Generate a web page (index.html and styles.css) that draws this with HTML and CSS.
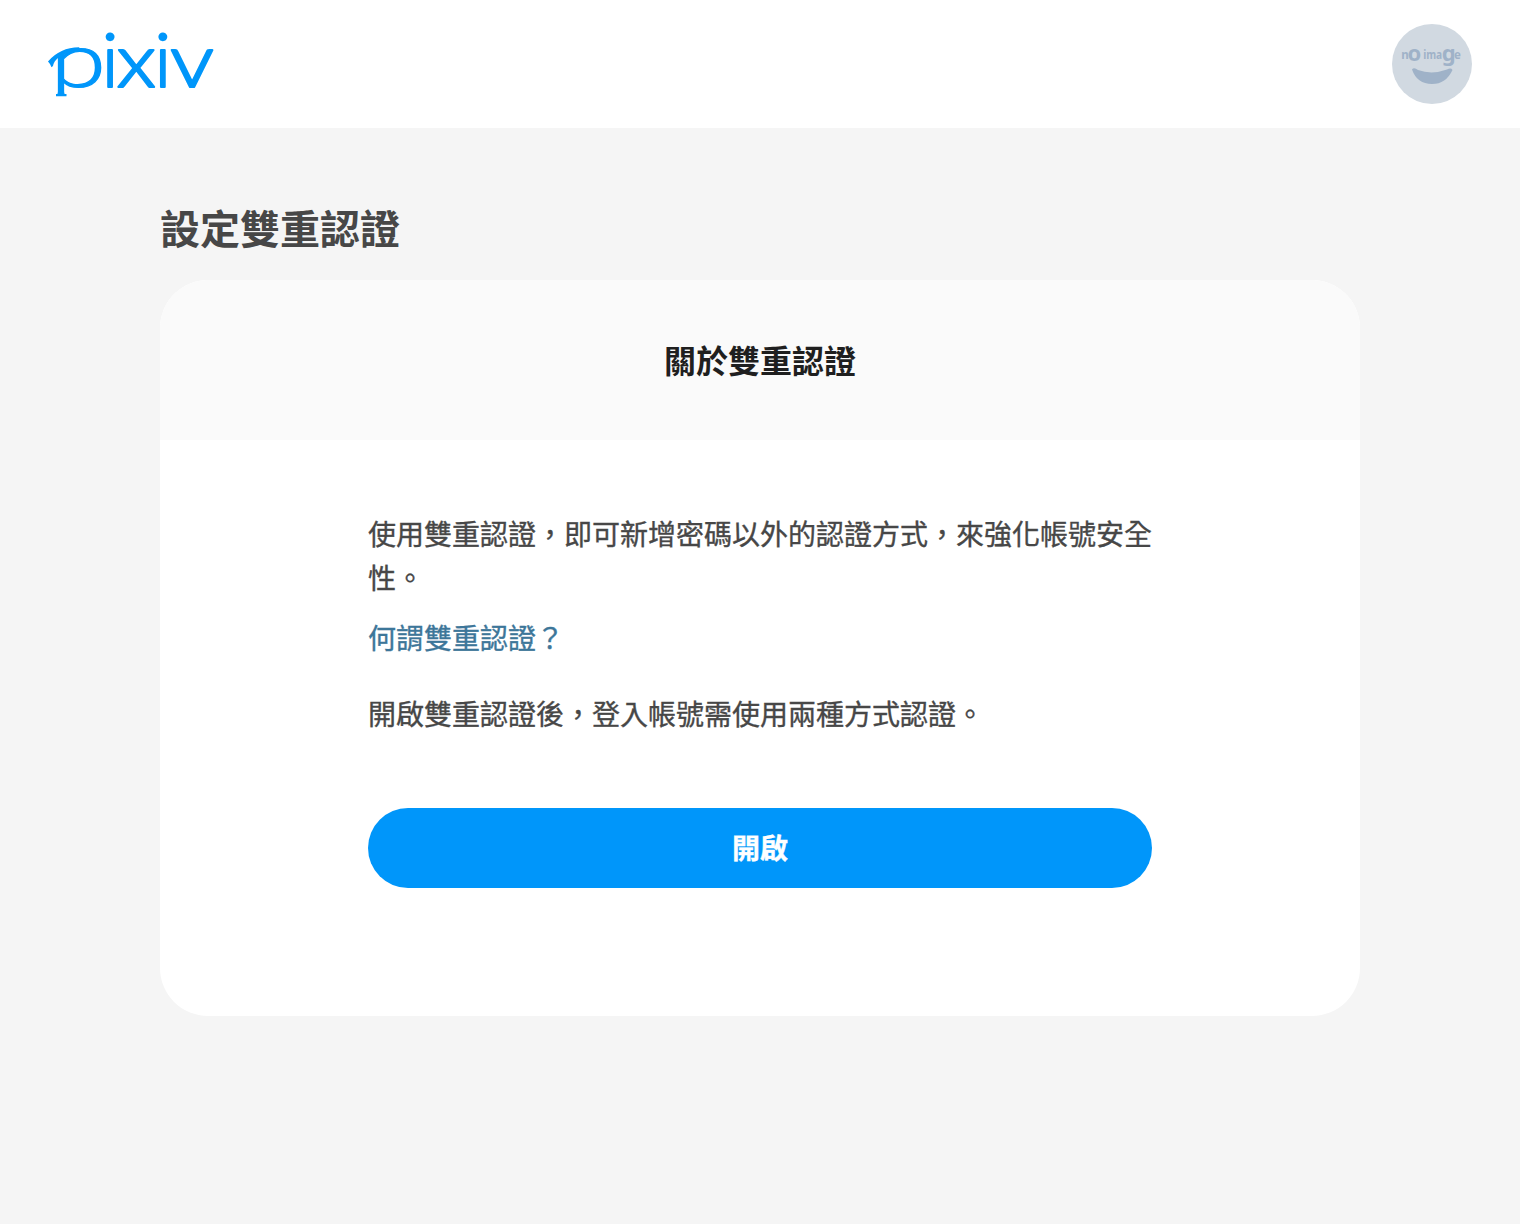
FILE: index.html
```
<!DOCTYPE html>
<html lang="zh-TW">
<head>
    <meta charset="UTF-8">
    <meta name="viewport" content="width=device-width, initial-scale=1.0">
    <title>設定雙重認證 - pixiv</title>
    <link rel="stylesheet" href="styles.css">
</head>
<body>
    <header class="header">
        <a class="logo" href="#">
            <svg width="166" height="66" viewBox="48 31 166 66" role="img" aria-label="pixiv">
                <clipPath id="stemClip"><path d="M57.5 56L64 51L70 48L76 45H110V95H57.5Z"/></clipPath>
                <g clip-path="url(#stemClip)">
                    <text class="logo-p" transform="translate(50.2 87) scale(1.31 1)">p</text>
                </g>
                <path d="M48 61.5Q60 47.5 79 47.3L81 50Q69 50.5 64 55L58 58Q54 61 53 66L51.5 67.3Q50.5 64 48 61.5Z"/>
                <path d="M58 92H64L64.5 94H66.5V96.2H56V94H57.5Z"/>
                <text class="logo-rest" x="101.7" y="87">i</text>
                <text class="logo-rest" transform="translate(116.7 87) scale(1.11 1)">x</text>
                <text class="logo-rest" x="154.5" y="87">i</text>
                <text class="logo-rest" transform="translate(170.3 87) scale(1.16 1)">v</text>
            </svg>
        </a>
        <svg class="avatar" width="80" height="80" viewBox="0 0 80 80">
            <circle cx="40" cy="40" r="40" fill="#d1d9e1"/>
            <g class="avatar-text">
                <text x="9.3" y="34.8">n</text>
                <text class="big" x="15.6" y="37">o</text>
                <text x="31.2" y="34.8" textLength="19" lengthAdjust="spacingAndGlyphs">ima</text>
                <text class="big" x="49.7" y="36.5">g</text>
                <text x="62" y="34.8">e</text>
            </g>
            <path d="M20 45.5Q22 43 26 46Q40 51 55 45.5Q59 43.5 60.5 46Q54 60 40 60Q25 60 20 45.5Z" fill="#9fb2c8"/>
        </svg>
    </header>

    <main class="container">
        <h1>設定雙重認證</h1>
        <section class="card">
            <h2 class="card-title">關於雙重認證</h2>
            <div class="card-body">
                <p>使用雙重認證，即可新增密碼以外的認證方式，來強化帳號安全性。</p>
                <a class="help-link" href="#">何謂雙重認證？</a>
                <p>開啟雙重認證後，登入帳號需使用兩種方式認證。</p>
                <button class="enable-button">開啟</button>
            </div>
        </section>
    </main>
</body>
</html>
```
FILE: styles.css
```
* {
    box-sizing: border-box;
}
body {
    margin: 0;
    min-height: 100vh;
    background-color: #f5f5f5;
    color: #474747;
    font-family: "Noto Sans CJK TC", sans-serif;
}
.header {
    display: flex;
    justify-content: space-between;
    align-items: center;
    height: 128px;
    padding: 0 48px;
    background-color: #fff;
}
.logo svg {
    display: block;
    fill: #0096fa;
    overflow: visible;
}
.logo-p {
    font-family: Lato, sans-serif;
    font-size: 77px;
    font-weight: 300;
    stroke: #0096fa;
    stroke-width: 1.2px;
}
.logo-rest {
    font-family: Lato, sans-serif;
    font-size: 75px;
    font-weight: 300;
    stroke: #0096fa;
    stroke-width: 2.2px;
    stroke-linejoin: round;
}
.avatar-text {
    fill: #9fb2c8;
    font-family: "Noto Sans", sans-serif;
    font-size: 11.5px;
    font-weight: 700;
}
.avatar-text .big {
    font-size: 22px;
}
.container {
    width: 1200px;
    margin: 0 auto;
    padding-top: 71px;
}
h1 {
    margin: 0 0 25px;
    font-size: 40px;
    line-height: 56px;
    font-weight: 700;
}
.card {
    border-radius: 48px;
    background-color: #fff;
    overflow: hidden;
}
.card-title {
    height: 160px;
    margin: 0;
    background-color: #fafafa;
    color: #1f1f1f;
    font-size: 32px;
    line-height: 158px;
    font-weight: 700;
    text-align: center;
}
.card-body {
    padding: 71px 208px 128px;
    font-size: 28px;
    line-height: 44px;
    -webkit-text-stroke: 0.35px;
}
.card-body p {
    margin: 0;
}
.help-link {
    display: block;
    margin: 16px 0 32px;
    color: #3d7699;
    text-decoration: none;
}
.enable-button {
    display: block;
    width: 100%;
    height: 80px;
    margin-top: 73px;
    padding: 0 0 3px;
    border: 0;
    border-radius: 40px;
    background-color: #0096fa;
    color: #fff;
    font-family: inherit;
    font-size: 28px;
    font-weight: 700;
    cursor: pointer;
}
```
